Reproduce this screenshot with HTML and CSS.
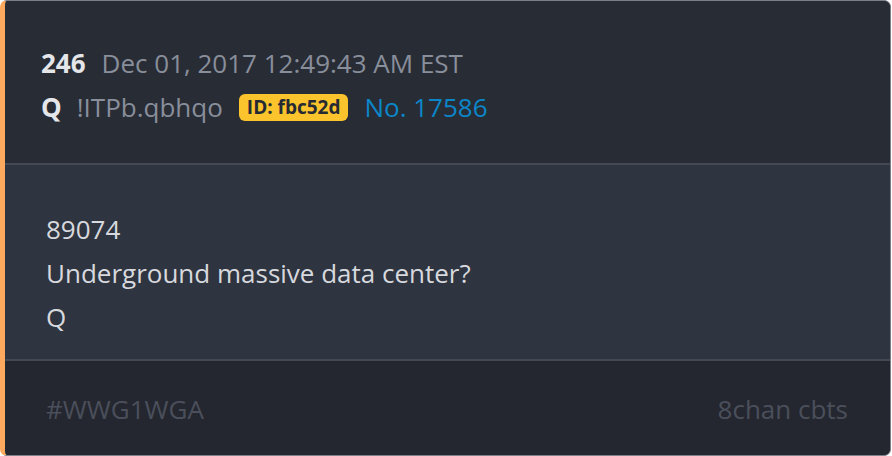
FILE: index.html
```html
<!DOCTYPE html>
<html>
<head>
<meta charset="utf-8">
<link rel="stylesheet" href="styles.css">
</head>
<body>
<div class="card">
  <div class="head">
    <div class="row">
      <span class="num">246</span>
      <span class="date">Dec 01, 2017 12:49:43 AM EST</span>
    </div>
    <div class="row">
      <span class="num">Q</span>
      <span class="trip">!ITPb.qbhqo</span>
      <span class="badge">ID: fbc52d</span>
      <span class="no">No. 17586</span>
    </div>
  </div>
  <div class="body">
    <p>89074</p>
    <p>Underground massive data center?</p>
    <p>Q</p>
  </div>
  <div class="foot">
    <span>#WWG1WGA</span>
    <span>8chan cbts</span>
  </div>
</div>
</body>
</html>
```
FILE: styles.css
```css
html, body { margin: 0; padding: 0; background: #ffffff; }
body { width: 892px; height: 456px; font-family: "Open Sans", sans-serif; }
.card {
  box-sizing: border-box;
  width: 891px;
  height: 456px;
  border: 1px solid #7b7f8a;
  border-left: 5px solid #fdaa5e;
  border-radius: 7px;
  overflow: hidden;
  display: flex;
  flex-direction: column;
  background: #282c35;
}
.head {
  height: 164px;
  flex: none;
  box-sizing: border-box;
  padding: 40px 0 0 36px;
  border-bottom: 2px solid #434852;
  background: #282c35;
}
.row { display: flex; align-items: center; gap: 16px; height: 44px; font-size: 26px; }
.num { font-weight: 700; color: #e4e6ea; }
.num + .trip { margin-left: -1px; }
.date, .trip { color: #898e9b; }
.badge {
  background: #fcc42c;
  color: #262a33;
  font-weight: 700;
  font-size: 19px;
  border-radius: 6px;
  padding: 0 8px;
  line-height: 27px;
}
.no { color: #0b86c8; }
.body {
  height: 196px;
  flex: none;
  box-sizing: border-box;
  padding: 42px 0 0 41px;
  background: #2f3540;
  border-bottom: 2px solid #434852;
  color: #d7d9de;
  font-size: 26px;
}
.body p { margin: 0; height: 44px; line-height: 44px; }
.foot {
  flex: 1;
  background: #24272f;
  display: flex;
  justify-content: space-between;
  align-items: center;
  padding: 2px 42px 0 41px;
  color: #4a4f5b;
  font-size: 26px;
}
```
